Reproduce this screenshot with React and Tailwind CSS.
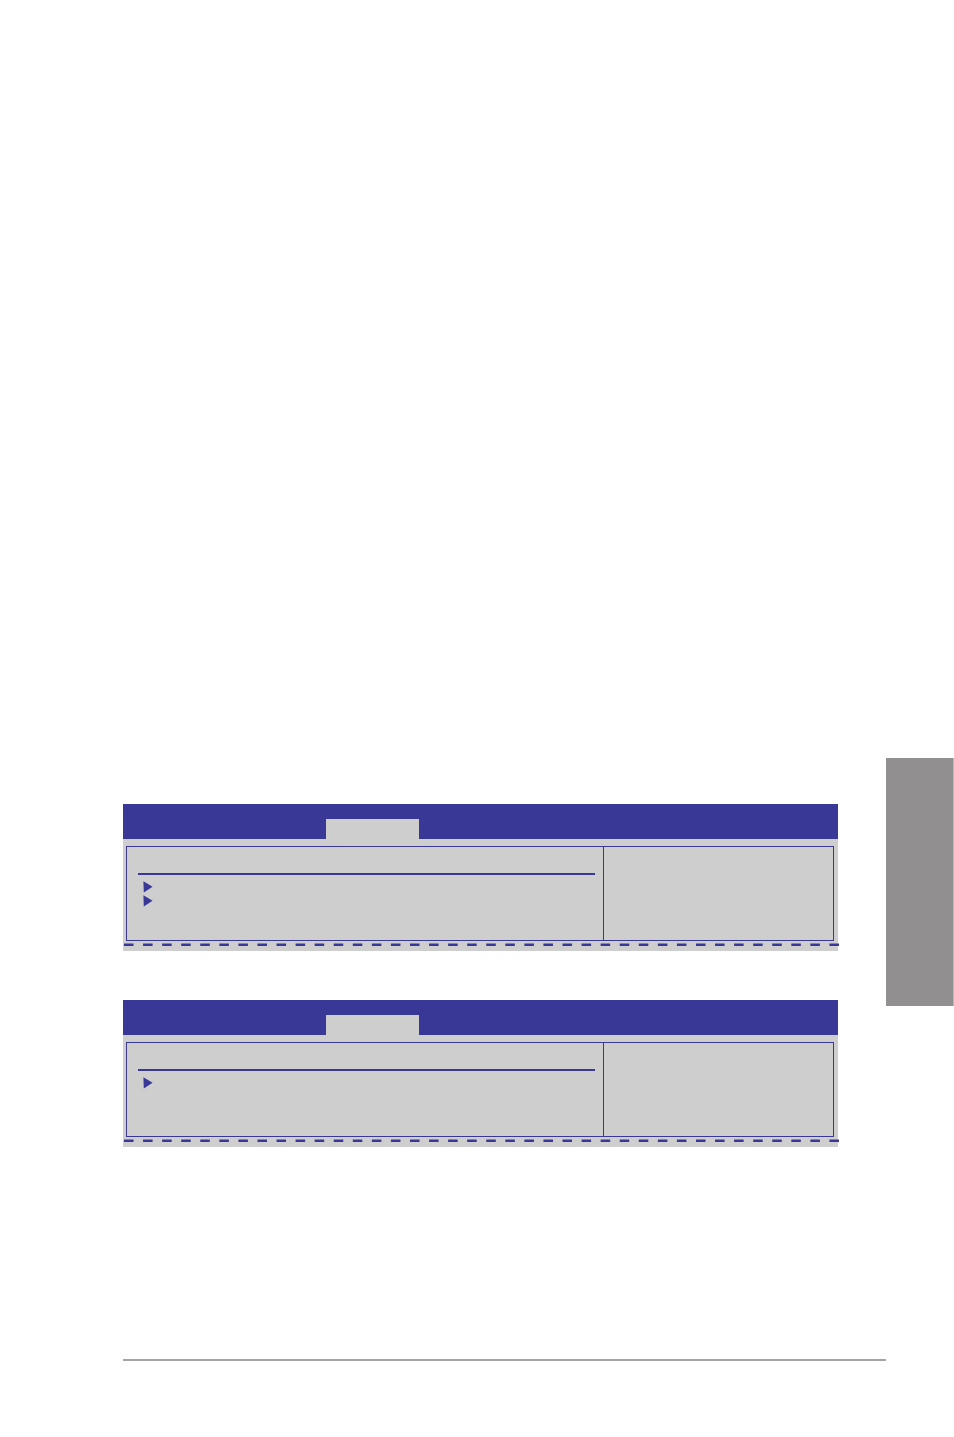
import React from 'react';

const panels = [
  { id: 'first', items: 2 },
  { id: 'second', items: 1 },
];

const Arrow = () => (
  <svg className="block h-3 w-[10px]" viewBox="0 0 10 12" aria-hidden="true">
    <path d="M0.4 0.3 L9.6 5.7 L0.8 11.5 Z" fill="#3a3897" />
  </svg>
);

const DashedLine = () => (
  <svg
    className="ml-px mt-0.5 block h-[3px] w-full overflow-visible"
    viewBox="0 0 715 3"
    preserveAspectRatio="none"
    aria-hidden="true"
  >
    <line
      x1="0"
      y1="1.8"
      x2="715"
      y2="1.8"
      stroke="#3a3897"
      strokeWidth="2.4"
      strokeDasharray="9.533 9.533"
    />
  </svg>
);

const SetupPanel = ({ items }) => {
  return (
    <section className="bg-[#cecece] pb-[5px]">
      {/* Title bar with the active tab */}
      <div className="flex h-[35px] items-end bg-[#3a3897] pl-[203px]">
        <div className="h-5 w-[93px] bg-[#cecece]"></div>
      </div>

      {/* Menu pane and help pane */}
      <div className="ml-[3px] mr-1 mt-[7px] flex h-[95px] border border-[#3a3897]">
        <div className="flex-1 pl-[11px] pr-2 pt-[26px]">
          <div className="h-0.5 bg-[#3a3897]"></div>
          <ul className="mt-1.5 flex flex-col gap-[2px] pl-[5px]">
            {Array.from({ length: items }, (_, index) => (
              <li key={index}>
                <Arrow />
              </li>
            ))}
          </ul>
        </div>
        <div className="w-[230px] border-l border-[#3a3897]"></div>
      </div>

      <DashedLine />
    </section>
  );
};

const App = () => {
  return (
    <div className="flex min-h-screen bg-white">
      <main className="flex-1 pl-[123px] pt-[804px]">
        <div className="mr-12 flex flex-col gap-[49px]">
          {panels.map((panel) => (
            <SetupPanel key={panel.id} items={panel.items} />
          ))}
        </div>

        {/* Footer rule */}
        <hr className="mt-[212px] h-0.5 border-0 bg-[#a5a3a4]" />
      </main>

      {/* Chapter tab on the page edge */}
      <aside className="mt-[758px] h-[248px] w-[68px] border-r border-[#b9b7b8] bg-[#918f90]"></aside>
    </div>
  );
};

export default App;
